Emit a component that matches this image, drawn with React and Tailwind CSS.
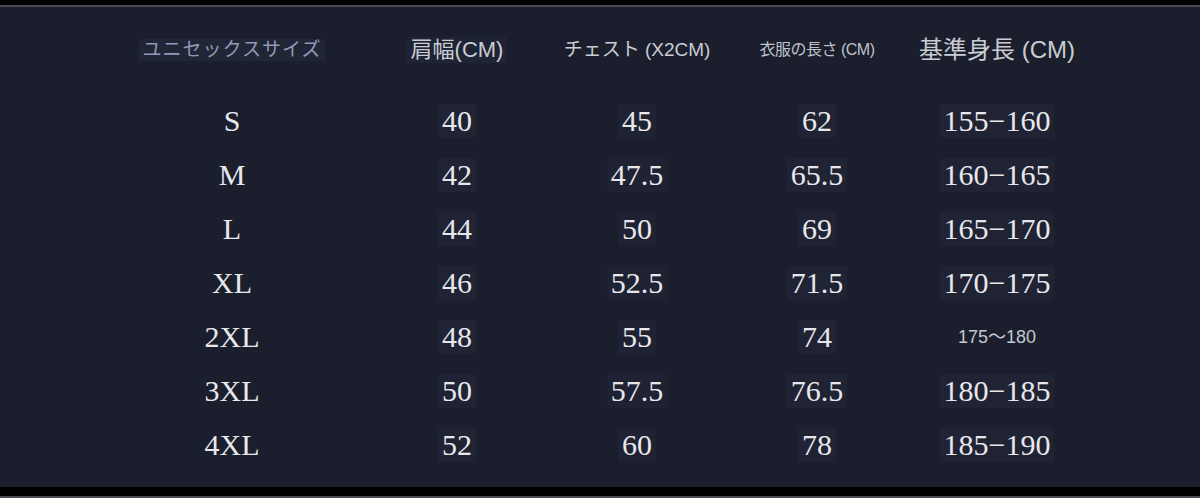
import React from 'react';

const rows = [
  { size: 'S', shoulder: '40', chest: '45', length: '62', height: '155−160' },
  { size: 'M', shoulder: '42', chest: '47.5', length: '65.5', height: '160−165' },
  { size: 'L', shoulder: '44', chest: '50', length: '69', height: '165−170' },
  { size: 'XL', shoulder: '46', chest: '52.5', length: '71.5', height: '170−175' },
  { size: '2XL', shoulder: '48', chest: '55', length: '74', height: '175〜180', small: true },
  { size: '3XL', shoulder: '50', chest: '57.5', length: '76.5', height: '180−185' },
  { size: '4XL', shoulder: '52', chest: '60', length: '78', height: '185−190' },
];

const jp = { fontFamily: '"Liberation Sans", "Noto Sans CJK JP", sans-serif' };
const serif = { fontFamily: '"Liberation Serif", "Noto Sans CJK JP", serif' };

const Cell = ({ children, className = '', style = serif }) => (
  <div className="flex items-center justify-center whitespace-nowrap">
    <span className={`px-1 leading-[1.15] ${className}`} style={style}>
      {children}
    </span>
  </div>
);

const App = () => {
  return (
    <div className="w-[1200px] h-[498px] bg-black flex flex-col overflow-hidden">
      <div className="h-[5px] bg-black" />
      <div className="h-[2px] bg-[#4a4b52]" />

      {/* Size table */}
      <div className="h-[480px] bg-[#1b1e2d] pl-[97px] pt-[16px]">
        <div className="grid grid-cols-[270px_180px_180px_180px_180px] h-[54px]">
          <Cell className="text-[19px] text-[#8e9bb6] bg-[#212636] tracking-[1px]" style={jp}>
            ユニセックスサイズ
          </Cell>
          <Cell className="text-[22px] text-[#c9ccd3] bg-[#1f2434]" style={jp}>
            肩幅(CM)
          </Cell>
          <Cell className="text-[19px] text-[#c9ccd3]" style={jp}>
            チェスト (X2CM)
          </Cell>
          <Cell className="text-[16px] text-[#bfc2ca] tracking-[-0.5px]" style={jp}>
            衣服の長さ (CM)
          </Cell>
          <Cell className="text-[24px] text-[#c9ccd3]" style={jp}>
            基準身長 (CM)
          </Cell>
        </div>

        <div className="mt-[19px] flex flex-col">
          {rows.map((r) => (
            <div
              key={r.size}
              className="grid grid-cols-[270px_180px_180px_180px_180px] h-[54px] text-[30px] text-[#e8e8ec] -translate-y-[2px]"
            >
              <Cell>{r.size}</Cell>
              <Cell className="bg-[#1f2334]">{r.shoulder}</Cell>
              <Cell className="bg-[#1e2233]">{r.chest}</Cell>
              <Cell className="bg-[#1f2334]">{r.length}</Cell>
              {r.small ? (
                <Cell className="text-[18px] text-[#c4c7ce]" style={jp}>
                  {r.height}
                </Cell>
              ) : (
                <Cell className="bg-[#1f2334]">{r.height}</Cell>
              )}
            </div>
          ))}
        </div>
      </div>

      <div className="h-[9px] bg-black" />
      <div className="h-[2px] bg-[#4a4b52]" />
    </div>
  );
};

export default App;
